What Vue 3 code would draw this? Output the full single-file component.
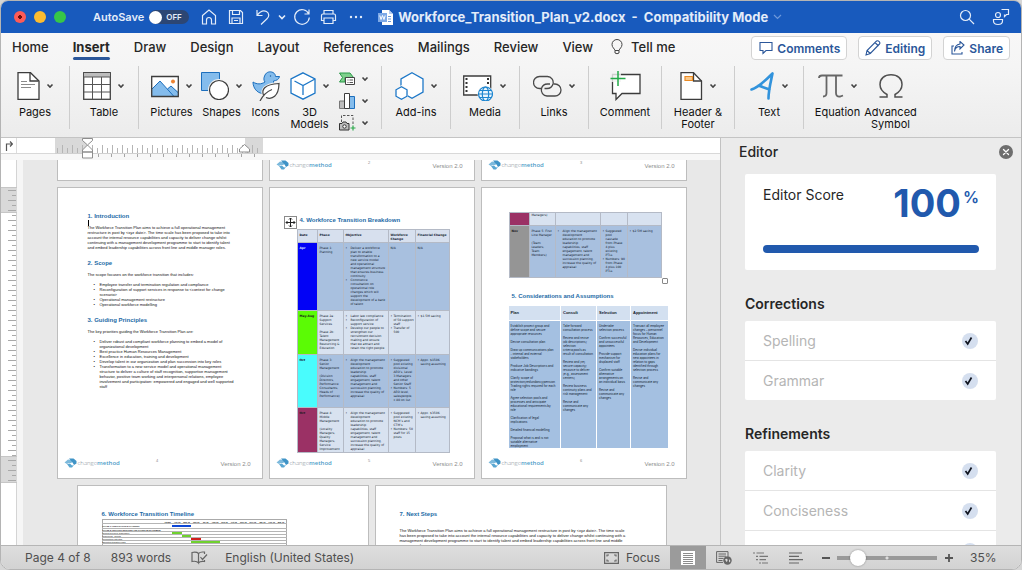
<script setup>
import { ref } from 'vue'

const autoSave = ref(false)
const zoom = ref(15)
const tabs = ['Home', 'Insert', 'Draw', 'Design', 'Layout', 'References', 'Mailings', 'Review', 'View']
const activeTab = ref('Insert')

const hTicks = Array.from({ length: 41 }, (_, i) => ({ x: 2 + i * 5, tall: i % 2 === 1 }))
const vTicks = Array.from({ length: 59 }, (_, i) => ({ y: 3 + i * 5, long: i % 2 === 0 }))

const intro = [
  {
    title: '1. Introduction', caret: true,
    text: 'The Workforce Transition Plan aims to achieve a full operational management\nrestructure in post by <xyz date>. The time scale has been proposed to take into\naccount the internal resource capabilities and capacity to deliver change whilst\ncontinuing with a management development programme to start to identify talent\nand embed leadership capabilities across front line and middle manager roles.',
    items: []
  },
  {
    title: '2. Scope',
    text: 'The scope focuses on the workforce transition that includes:',
    items: [
      'Employee transfer and termination regulation and compliance',
      'Reconfiguration of support services in response to <context for change\nscenario>',
      'Operational management restructure',
      'Operational workforce modelling'
    ]
  },
  {
    title: '3. Guiding Principles',
    text: 'The key priorities guiding the Workforce Transition Plan are:',
    items: [
      'Deliver robust and compliant workforce planning to embed a model of\norganizational development',
      'Best practice Human Resources Management',
      'Excellence in education, training and development',
      'Develop talent in our organization and plan succession into key roles',
      'Transformation to a new service model and operational management\nstructure to deliver a culture of staff recognition, supportive management\nbehavior, positive team working and interpersonal relations, employee\ninvolvement and participation: empowered and engaged and well supported\nstaff'
    ]
  }
]

const nextSteps = 'The Workforce Transition Plan aims to achieve a full operational management restructure in post by <xyz date>. The time scale\nhas been proposed to take into account the internal resource capabilities and capacity to deliver change whilst continuing with a\nmanagement development programme to start to identify talent and embed leadership capabilities across front line and middle\nmanager roles.'

const align = ['Align the management\ndevelopment\neducation to promote\nleadership\ncapabilities, staff\nengagement, talent\nmanagement and\nsuccession planning,\nincrease the quality of\nappraisal']

const breakdown = [
  {
    h: 68, tone: 'shade', mark: 'blue', date: 'Apr', phase: 'Phase 1:\nPlanning',
    objective: ['Deliver a workforce\nplan to enable\ntransformation to a\nnew service model\nand operational\nmanagement structure\nthat ensures business\ncontinuity', 'Commence\nconsultation on\noperational role\nchanges which will\nsupport the\ndevelopment of a bank\nof talent'],
    workforce: 'N/A', finance: 'N/A'
  },
  {
    h: 44, tone: 'tint', mark: 'green', date: 'May-Aug', phase: 'Phase 2a:\nSupport\nServices\n\nPhase 2b:\nTalent\nManagement\nResourcing &\nEducation',
    objective: ['Labor law compliance', 'Reconfiguration of\nsupport service', 'Develop our people to\nstrengthen our\nrecruitment decision\nmaking and ensure\nthat we attract and\nretain the right people'],
    workforce: ['Termination\nof 50 support\nstaff', 'Transfer of\n500'], finance: ['$1.5M saving']
  },
  {
    h: 53, tone: 'shade', mark: 'cyan', date: 'Oct', phase: 'Phase 3:\nSenior\nManagement\n\n(Division\nDirectors,\nPerformance\nConsultants,\nHeads of\nPerformance)',
    objective: align,
    workforce: ['Suggested\npool existing\ndivisional\nAEO’s, Level\n3 Managers\nand other\nSenior Staff', 'Numbers: 5\nAEO level,\nsalespeople,\nx 80 on list'], finance: ['Appx. $150K\nsaving assuming']
  },
  {
    h: 45, tone: 'tint', mark: 'plum', date: 'Oct', phase: 'Phase 4:\nMiddle\nManagement\n\n(Locality\nManagers,\nQuality\nManagers,\nService\nImprovement',
    objective: align,
    workforce: ['Suggested\npool existing\nNCM’s and\nCTM’s', 'Numbers: 50\nstaff for 15\nposts'], finance: ['Appx. $350K\nsaving assuming']
  }
]

const continued = [
  { h: 13, tone: 'tint', mark: 'plum', date: '', phase: 'Managers)', objective: [], workforce: '', finance: '', cut: true },
  {
    h: 52, tone: 'shade', mark: 'gray', date: 'Nov', phase: 'Phase 5: First\nLine Manager\n\n(Team\nLeaders,\nTeam\nMembers)',
    objective: align,
    workforce: ['Suggested\npool\ncascade\nfrom Phase\n4 plus\nexisting\nPTLs', 'Numbers: 90\nfrom Phase\n4 plus 100\nPTLs'], finance: ['$2.5M saving']
  }
]

const plan = [
  { title: 'Plan', text: 'Establish project group and\ndefine scope and secure\nappropriate resources\n\nDevise consultation plan\n\nDraw up communications plan\n- internal and external\nstakeholders\n\nProduce Job Descriptions and\nindicative bandings\n\nClarify scope of\nprotection/redundancy/pension\nTrading rights required for each\nrole\n\nAgree selection pools and\nprocesses and anticipate\neducational requirements by\nrole\n\nClarification of legal\nimplications\n\nDetailed financial modelling\n\nProposal what is and is not\nsuitable alternative\nemployment' },
  { title: 'Consult', text: 'Take forward\nconsultation process\n\nReview and revise\njob descriptions/\nselection\ncriteria/pools as\nresult of consultation\n\nReview and (re)\nsecure capacity/\nresource to deliver\n(e.g., assessment\ncenters)\n\nReview business\ncontinuity plans and\nrisk management\n\nRevise and\ncommunicate any\nchanges' },
  { title: 'Selection', text: 'Undertake\nselection process\n\nConfirm successful\nand unsuccessful\nappointees\n\nProvide support\nmechanism for\ndisplaced staff\n\nConfirm suitable\nalternative\narrangements on\nan individual basis\n\nRevise and\ncommunicate any\nchanges' },
  { title: 'Appointment', text: 'Transact all employee\nchanges – personnel\nfocus for Human\nResources, Education\nand Development\n\nDevise individual\neducation plans for\nnew appointees in\nrelation to gaps\nidentified through\nselection process\n\nRevise and\ncommunicate any\nchanges' }
]

const months = ['12 Mar', 'Apr 12', 'May 12', 'Jun 12', 'Jul 12', 'Aug 12', 'Sep 12', 'Oct 12', 'Nov 12', 'Dec 12', 'Jan 13', 'Feb 13', 'Mar 13']
const gantt = [
  { h: 5, label: 'PHASE 1: PREPARATION & PLANNING', from: 9, width: 19, color: '#0d47d6', bold: true },
  { h: 3, label: 'PHASE 2: SUPPORT SERVICES AND TALENT MANAGEMENT', from: 0, width: 0, color: 'transparent', bold: true },
  { h: 3, label: 'Support Services: Suspension', from: 9, width: 10, color: '#6fd12f' },
  { h: 3, label: 'Resourcing - Talents', from: 19, width: 9, color: '#6fd12f' },
  { h: 3, label: 'Consultation with staff', from: 28, width: 10, color: '#d0201c' },
  { h: 3, label: 'Education/transition posts', from: 28, width: 29, color: '#6fd12f' },
  { h: 4, label: 'Implementation of posts', from: 9, width: 29, color: '#6fd12f' },
  { h: 3, label: 'Full new structure', from: 38, width: 9, color: '#d0201c' }
]

const rows = [
  { key: 'top', pages: [{ id: 'p1', kind: 'blank' }, { id: 'p2', kind: 'blank', num: 2 }, { id: 'p3', kind: 'blank', num: 3 }] },
  { key: 'middle', pages: [{ id: 'p4', kind: 'intro', num: 4 }, { id: 'p5', kind: 'breakdown', num: 5 }, { id: 'p6', kind: 'assumptions', num: 6 }] },
  { key: 'bottom', pages: [{ id: 'p7', kind: 'timeline' }, { id: 'p8', kind: 'next' }] }
]

const editorGroups = [
  { title: 'Corrections', items: ['Spelling', 'Grammar'] },
  { title: 'Refinements', items: ['Clarity', 'Conciseness', ''] }
]
</script>

<template>
  <div class="window">
    <header class="titlebar">
      <div class="lights">
        <button class="light red" aria-label="Close"></button>
        <button class="light yellow" aria-label="Minimize"></button>
        <button class="light green" aria-label="Zoom"></button>
      </div>
      <label class="autosave">
        <span>AutoSave</span>
        <input v-model="autoSave" type="checkbox" />
        <span class="switch"><i></i>OFF</span>
      </label>
      <div class="quick">
        <button aria-label="Home"><svg width="16" height="16" viewBox="0 0 16 16"><path d="M1.500 6.500 8 1l6.500 5.500v8.500h-4V11a2.500 2.500 0 0 0-5 0v4h-4z" /></svg></button>
        <button aria-label="Save"><svg width="16" height="16" viewBox="0 0 16 16"><path d="M1.500 1.500h11l2 2v11h-13zM4.500 1.500v4h7v-4M4 14.500V9h8v5.500M6 11.500h4" /></svg></button>
        <button aria-label="Undo"><svg width="16" height="16" viewBox="0 0 16 16"><path d="M2 1v5.500h5.500M2.300 6.200C5 2.500 8.500 1 11.500 2.500c3 1.800 2.800 5.200.5 7.300L6 15.500" /></svg></button>
        <button class="slim" aria-label="Undo list"><svg class="thick" width="8" height="6" viewBox="0 0 8 6"><path d="m1 1.500 3 3 3-3" /></svg></button>
        <button aria-label="Redo"><svg width="18" height="18" viewBox="0 0 18 18"><path d="M16 1.500V6h-4.500M15.700 6A7.300 7.300 0 1 0 16.300 9.500" /></svg></button>
        <button aria-label="Print"><svg width="17" height="16" viewBox="0 0 17 16"><path d="M4 5V1.500h9V5M4 11.500H1.500v-5q0-1.500 1.500-1.500h11q1.500 0 1.500 1.500v5H13M4 9h9v5.500H4z" /></svg></button>
        <button aria-label="More"><svg class="solid" width="14" height="4" viewBox="0 0 14 4"><circle cx="2" cy="2" r="1.200" /><circle cx="7" cy="2" r="1.200" /><circle cx="12" cy="2" r="1.200" /></svg></button>
      </div>
      <h1 class="doc-name">
        <svg width="15" height="15" viewBox="0 0 15 15"><path d="M4 0h7l4 4v11H4z" fill="#fff" /><path d="M11 0v4h4z" fill="#b6cdf0" /><path d="M10 6.500h3M10 9h3M10 11.500h3" stroke="#6a97d8" /><rect y="3" width="9" height="9" fill="#7ea9e6" /><path d="m1.800 5.500 1.200 4 1.500-4 1.500 4 1.200-4" fill="none" stroke="#fff" /></svg>
        <span>Workforce_Transition_Plan_v2.docx&nbsp; -&nbsp; Compatibility Mode</span>
        <svg width="9" height="6" viewBox="0 0 9 6"><path d="m1 1 3.500 3.500L8 1" fill="none" stroke="#6e98da" stroke-width="1.200" /></svg>
      </h1>
      <div class="title-right">
        <button aria-label="Search"><svg width="16" height="16" viewBox="0 0 16 16"><circle cx="6.500" cy="6.500" r="5" /><path d="m10.200 10.200 4.800 4.800" /></svg></button>
        <button aria-label="Presence"><svg width="18" height="18" viewBox="0 0 18 18"><path d="M9.500 1.500h7v5h-2l-2 2v-2" /><circle cx="6" cy="7" r="2.500" /><path d="M1.500 11.500h9v1.500q0 3.500-4.500 3.500T1.500 13z" /></svg></button>
      </div>
    </header>

    <nav class="tabs">
      <button v-for="t in tabs" :key="t" class="tab" :class="{ active: t === activeTab }" @click="activeTab = t">{{ t }}</button>
      <button class="tab tell">
        <svg width="12" height="16" viewBox="0 0 12 16"><path d="M4 11.500C3.500 9.500 1 8.500 1 5.500a5 5 0 0 1 10 0c0 3-2.500 4-3 6zM4 11.500v2.500q2 1.500 4 0v-2.500" fill="none" stroke="#444" /></svg>Tell me
      </button>
      <div class="actions">
        <button><svg width="14" height="14" viewBox="0 0 14 14"><path d="M1 1.500h12v8H7l-3 3v-3H1z" /></svg>Comments</button>
        <button class="tight"><svg width="16" height="16" viewBox="0 0 16 16"><path d="m1 15 1-4.500L11.500 1q1.500-.8 2.700.6T14.500 4L5.300 13.500zM10 2.500 13.500 6M2 10.500 5.300 13.500" /></svg>Editing</button>
        <button><svg width="14" height="14" viewBox="0 0 14 14"><path d="M3 5H1v8h10v-2M3.500 10.500C4 7 6 5.500 9 5.500v2.500l4-4-4-3.500V3C5.500 3.500 3.500 6 3.500 10.500z" /></svg>Share</button>
      </div>
    </nav>

    <section class="ribbon">
      <div class="group single">
        <button class="tool">
          <span class="icons"><svg width="23" height="28" viewBox="0 0 23 28"><path d="M1 .700h12.500L22 9v18.300H1z" fill="#fff" stroke="#3c3c3c" stroke-width="1.300" /><path d="M13 1v8h8.500" fill="none" stroke="#3c3c3c" stroke-width="1.300" /><path d="M4 9.500h6M4 12.500h14M4 15.500h10" stroke="#8a8a8a" /></svg><svg class="chev" viewBox="0 0 8 6"><path d="m1.500 1.500 2.500 2.500 2.500-2.500" /></svg></span>
          <span class="label">Pages</span>
        </button>
      </div>
      <div class="group single">
        <button class="tool">
          <span class="icons"><svg width="28" height="28" viewBox="0 0 28 28"><rect x=".700" y=".700" width="26.600" height="26.600" fill="#fff" stroke="#444" stroke-width="1.300" /><path d="M1 1h26v4H1z" fill="#bdbdbd" /><path d="M1 5h26M1 12.500h26M1 20h26M9.500 5v22M18.500 5v22" stroke="#555" /></svg><svg class="chev" viewBox="0 0 8 6"><path d="m1.500 1.500 2.500 2.500 2.500-2.500" /></svg></span>
          <span class="label">Table</span>
        </button>
      </div>
      <div class="group wide">
        <button class="tool">
          <span class="icons"><svg width="28" height="28" viewBox="0 0 28 28"><path d="M.700 4.500h26.600v20H.700z" fill="#fff" /><path d="m1 17 8-8 14 15.500H1zM16 17l4-3 7 6v4.500h-4z" fill="#84bcec" /><path d="m1 17 8-8 14 15.500M16.500 17l3.500-3 7 6.500" fill="none" stroke="#1d6fbd" /><circle cx="22" cy="9.500" r="2" fill="#ee8432" /><path d="M.700 4.500h26.600v20H.700z" fill="none" stroke="#3c3c3c" stroke-width="1.300" /></svg><svg class="chev" viewBox="0 0 8 6"><path d="m1.500 1.500 2.500 2.500 2.500-2.500" /></svg></span>
          <span class="label">Pictures</span>
        </button>
        <button class="tool">
          <span class="icons"><svg width="28" height="28" viewBox="0 0 28 28"><path d="M.500.500h18v18H.500z" fill="#84bcec" stroke="#1d6fbd" /><circle cx="18" cy="18" r="11" fill="#f1f1f1" /><circle cx="18" cy="18" r="9.500" fill="#fff" stroke="#3c3c3c" stroke-width="1.200" /></svg><svg class="chev" viewBox="0 0 8 6"><path d="m1.500 1.500 2.500 2.500 2.500-2.500" /></svg></span>
          <span class="label">Shapes</span>
        </button>
        <button class="tool narrow">
          <span class="icons"><svg width="28" height="30" viewBox="0 0 28 30"><path d="M1 11c4 2.500 8 2.500 12 0-1.500-2-1.500-4 0-7s5-4 8-2.500c2 1 2.500 3 2.500 4h4c-.5 3-3 4-6 4.500v8c-2 4-7 5-11 4.500C5 22 1 17 1 11z" fill="#84bcec" stroke="#1d6fbd" /><path d="M11.500 24c-2-5 0-10.500 15.500-11.500-.3 13-7 16.500-13 14z" fill="#fff" stroke="#f1f1f1" stroke-width="3" /><path d="M11.500 24c-2-5 0-10.500 15.500-11.500-.3 13-7 16.500-13 14" fill="#fff" stroke="#444" stroke-width="1.200" /><path d="M8 30c3-6 7-9.500 12-11.500" fill="none" stroke="#444" stroke-width="1.200" /><circle cx="18.500" cy="5" r=".7" fill="#1d5f9f" /></svg></span>
          <span class="label">Icons</span>
        </button>
        <button class="tool">
          <span class="icons"><svg width="26" height="28" viewBox="0 0 26 28"><path d="m13 .800 12 6.200v14l-12 6.200L1 21V7z" fill="#fff" stroke="#1e78c8" stroke-width="1.300" /><path d="m4.500 9 8.500 4.500L25 7M13 13.500V23" fill="none" stroke="#1e78c8" stroke-width="1.300" /></svg><svg class="chev" viewBox="0 0 8 6"><path d="m1.500 1.500 2.500 2.500 2.500-2.500" /></svg></span>
          <span class="label">3D<br />Models</span>
        </button>
        <div class="stack">
          <button aria-label="SmartArt"><svg width="17" height="16" viewBox="0 0 17 16"><path d="M.500 2h10.500l3.500 4.500H6V11H.500l3-4.500z" fill="#7fd08c" stroke="#2b9a49" /><path d="M6.500 6.500h9v7h-9z" fill="#fff" stroke="#444" /><path d="M8.500 9h1m1 0h3.500m-5.500 2.500h1m1 0h3.500" stroke="#555" /></svg><svg class="chev" viewBox="0 0 8 6"><path d="m1.500 1.500 2.500 2.500 2.500-2.500" /></svg></button>
          <button aria-label="Chart"><svg width="17" height="16" viewBox="0 0 17 16"><path d="M.500 8h5v7.500h-5z" fill="#bdbdbd" stroke="#777" /><path d="M10.500 3.500h5v12h-5z" fill="#84bcec" stroke="#1d6fbd" /><path d="M5.500.500h5v15h-5z" fill="#fff" stroke="#3c3c3c" /></svg><svg class="chev" viewBox="0 0 8 6"><path d="m1.500 1.500 2.500 2.500 2.500-2.500" /></svg></button>
          <button aria-label="Screenshot"><svg width="17" height="16" viewBox="0 0 17 16"><path d="M2.500 7V.500h11.500V9" fill="none" stroke="#555" stroke-dasharray="2.500 1.500" /><path d="M.500 8.500h2.500l1-1.500h3l1 1.500h2v6.500H.500z" fill="#bdbdbd" stroke="#333" /><circle cx="5.500" cy="11.500" r="1.700" fill="#fff" stroke="#333" /><path d="M14 10.500v5M11.500 13h5" stroke="#2ba84a" stroke-width="1.200" /></svg><svg class="chev" viewBox="0 0 8 6"><path d="m1.500 1.500 2.500 2.500 2.500-2.500" /></svg></button>
        </div>
      </div>
      <div class="group single">
        <button class="tool">
          <span class="icons"><svg width="29" height="28" viewBox="0 0 29 28"><path d="m17 .800 11 6.200v13l-11 6.200L6 20V7z" fill="#fff" stroke="#1e78c8" stroke-width="1.300" /><path d="m6.500 13 6.500 4v7.500L6.500 28 0 24.500V17z" fill="#f3f3f3" /><path d="m6.500 14.800 5.500 3v6.400l-5.500 3-5.500-3v-6.400z" fill="#fff" stroke="#1e78c8" stroke-width="1.300" /></svg><svg class="chev" viewBox="0 0 8 6"><path d="m1.500 1.500 2.500 2.500 2.500-2.500" /></svg></span>
          <span class="label">Add-ins</span>
        </button>
      </div>
      <div class="group single">
        <button class="tool">
          <span class="icons"><svg width="30" height="30" viewBox="0 0 30 30"><path d="M.700 5h27v19H.700z" fill="#fff" stroke="#3c3c3c" stroke-width="1.300" /><path d="M3.500 7v16M25 7v6" stroke="#333" stroke-width="2" stroke-dasharray="2 2" /><circle cx="22.500" cy="23" r="8" fill="#f1f1f1" /><g fill="none" stroke="#1e86d0" stroke-width="1.200"><circle cx="22.500" cy="23" r="7" fill="#eaf5fd" /><ellipse cx="22.500" cy="23" rx="3.200" ry="7" /><path d="M15.500 23h14M16.500 19.500h12M16.500 26.500h12" /></g></svg><svg class="chev" viewBox="0 0 8 6"><path d="m1.500 1.500 2.500 2.500 2.500-2.500" /></svg></span>
          <span class="label">Media</span>
        </button>
      </div>
      <div class="group single">
        <button class="tool">
          <span class="icons"><svg width="29" height="28" viewBox="0 0 29 28"><g fill="none" stroke="#4a4a4a" stroke-width="1.300"><path d="M8 16.500H6.500a6 6 0 0 1 0-12h8a6 6 0 0 1 5.500 7.500c-.8 2.800-3 4.500-6 4.500h-2.500" /><path d="M20.500 12H22a6 6 0 0 1 0 12h-8a6 6 0 0 1-5.500-7.500c.8-2.800 3-4.500 6-4.500h2.500" /></g></svg><svg class="chev" viewBox="0 0 8 6"><path d="m1.500 1.500 2.500 2.500 2.500-2.500" /></svg></span>
          <span class="label">Links</span>
        </button>
      </div>
      <div class="group medium">
        <button class="tool">
          <span class="icons"><svg width="31" height="30" viewBox="0 0 31 30"><path d="M2.500 3.500H30v19H12l-6 6v-6H2.500z" fill="#fff" stroke="#3c3c3c" stroke-width="1.300" /><path d="M0 0h11v11H0z" fill="#f3f3f3" opacity=".8" /><path d="M8 0v15M.500 7.500h15" stroke="#22aa48" stroke-width="1.500" /></svg></span>
          <span class="label">Comment</span>
        </button>
      </div>
      <div class="group medium">
        <button class="tool">
          <span class="icons"><svg width="23" height="28" viewBox="0 0 23 28"><path d="M1 .700h12.500L21.500 9v18.300H1z" fill="#fff" stroke="#3c3c3c" stroke-width="1.300" /><path d="M13.500 1v8h8" fill="none" stroke="#3c3c3c" stroke-width="1.300" /><path d="M5 4.500h7.500v4H5z" fill="#fbc98a" stroke="#e98a25" stroke-width="1.200" /></svg><svg class="chev" viewBox="0 0 8 6"><path d="m1.500 1.500 2.500 2.500 2.500-2.500" /></svg></span>
          <span class="label">Header &amp;<br />Footer</span>
        </button>
      </div>
      <div class="group single">
        <button class="tool">
          <span class="icons"><svg width="25" height="28" viewBox="0 0 25 28"><path d="M1.500 17.500C8 15.500 16 8 22.500 1.500 21 9 18.500 18 18.500 26.500M8.500 13.500l11 4" fill="none" stroke="#3293dc" stroke-width="2.600" stroke-linecap="round" stroke-linejoin="round" /></svg><svg class="chev" viewBox="0 0 8 6"><path d="m1.500 1.500 2.500 2.500 2.500-2.500" /></svg></span>
          <span class="label">Text</span>
        </button>
      </div>
      <div class="group last">
        <button class="tool">
          <span class="icons"><svg width="26" height="28" viewBox="0 0 26 28"><path d="M1 6q0-2.500 3-2.500h20.500M8.500 3.500V21q0 3.500-3.500 3.500M18 3.500V21q0 4 4 3.500l3-1" fill="none" stroke="#666" stroke-width="1.800" /></svg><svg class="chev" viewBox="0 0 8 6"><path d="m1.500 1.500 2.500 2.500 2.500-2.500" /></svg></span>
          <span class="label">Equation</span>
        </button>
        <button class="tool">
          <span class="icons"><svg width="26" height="28" viewBox="0 0 26 28"><path d="M1.500 25H9v-2.500C4.500 20 2 17 2 12.500 2 6.500 6.500 2.800 13 2.800s11 3.700 11 9.700c0 4.500-2.500 7.500-7 10V25h7.500" fill="none" stroke="#505050" stroke-width="1.500" /></svg></span>
          <span class="label">Advanced<br />Symbol</span>
        </button>
      </div>
    </section>

    <main class="workspace">
      <div class="document">
        <div class="h-ruler">
          <span class="corner"><svg width="8" height="10" viewBox="0 0 8 10"><path d="M1.500 10V3H7M5 .500 7.500 3 5 5.500" fill="none" stroke="#555" stroke-width="1.200" /></svg></span>
          <svg class="h-scale" width="208" height="22" viewBox="0 0 208 22">
            <path d="M0 0h32v15H0zM190 0h18v15h-18z" fill="#d9d9d9" />
            <path d="M0 15.500h208" stroke="#d0d0d0" />
            <path v-for="t in hTicks" :key="t.x" :d="`M${t.x + 0.5} ${t.tall ? 7 : 10}V15`" stroke="#b5b5b5" />
            <path v-for="n in 13" :key="'u' + n" :d="`M${30.500 + n * 13} 16v3`" stroke="#a5a5a5" />
            <path d="M27.500.500h10v2l-5 4.500-5-4.500zM32.500 7l5 5v2h-10v-2zM27.500 14h10v6h-10zM184.500 14v-3l5-4.500 5 4.500v3z" fill="#fff" stroke="#8d8d8d" />
          </svg>
        </div>
        <div class="doc-body">
          <div class="v-ruler">
            <svg width="16" height="296" viewBox="0 0 16 296">
              <path d="M0 0h16v25H0zM0 270h16v25H0z" fill="#d9d9d9" />
              <path d="M0 25.500h16M0 269.500h16M0 .500h16M0 295.500h16" stroke="#c6c6c6" />
              <path v-for="t in vTicks" :key="t.y" :d="`M${t.long ? 7 : 11} ${t.y + 0.5}H15`" stroke="#a9a9a9" />
            </svg>
          </div>
          <div class="canvas">
            <div v-for="row in rows" :key="row.key" class="row" :class="row.key">
              <article v-for="page in row.pages" :key="page.id" class="page" :class="page.kind">
                <div v-if="page.kind === 'intro'" class="content">
                  <template v-for="s in intro" :key="s.title">
                    <h2>{{ s.title }}</h2>
                    <i v-if="s.caret" class="caret"></i>
                    <p>{{ s.text }}</p>
                    <ul v-if="s.items.length"><li v-for="item in s.items" :key="item">{{ item }}</li></ul>
                  </template>
                </div>

                <div v-else-if="page.kind === 'breakdown' || page.kind === 'assumptions'" class="content">
                  <div v-if="page.kind === 'breakdown'" class="table-title">
                    <span class="move"><svg width="11" height="11" viewBox="0 0 11 11"><path d="M5.500 1v9M1 5.500h9M4 2.500 5.500 1 7 2.500M4 8.500 5.500 10 7 8.500M2.500 4 1 5.500 2.500 7M8.500 4 10 5.500 8.500 7" fill="none" stroke="#222" /></svg></span>
                    <h2>4. Workforce Transition Breakdown</h2>
                  </div>
                  <table class="phases">
                    <colgroup><col class="c1" /><col class="c2" /><col class="c3" /><col class="c4" /><col class="c5" /></colgroup>
                    <thead v-if="page.kind === 'breakdown'">
                      <tr><th>Date</th><th>Phase</th><th>Objective</th><th>Workforce<br />Change</th><th>Financial Change</th></tr>
                    </thead>
                    <tbody>
                      <tr v-for="(r, i) in (page.kind === 'breakdown' ? breakdown : continued)" :key="i" :class="[r.tone, { cut: r.cut }]" :style="{ height: r.h + 'px' }">
                        <td class="date" :class="r.mark">{{ r.date }}</td>
                        <td>{{ r.phase }}</td>
                        <td><ul class="loose"><li v-for="o in r.objective" :key="o">{{ o }}</li></ul></td>
                        <td v-for="(c, k) in [r.workforce, r.finance]" :key="k">
                          <ul v-if="Array.isArray(c)"><li v-for="o in c" :key="o">{{ o }}</li></ul>
                          <template v-else>{{ c }}</template>
                        </td>
                      </tr>
                    </tbody>
                  </table>
                  <template v-if="page.kind === 'assumptions'">
                    <span class="resize"></span>
                    <h2>5. Considerations and Assumptions</h2>
                    <table class="plan">
                      <colgroup><col class="d1" /><col class="d2" /><col class="d3" /><col class="d4" /></colgroup>
                      <thead><tr><th v-for="c in plan" :key="c.title">{{ c.title }}</th></tr></thead>
                      <tbody><tr><td v-for="c in plan" :key="c.title">{{ c.text }}</td></tr></tbody>
                    </table>
                  </template>
                </div>

                <div v-else-if="page.kind === 'timeline'" class="content">
                  <h2>6. Workforce Transition Timeline</h2>
                  <table class="gantt">
                    <thead><tr><th class="task"></th><th v-for="m in months" :key="m">{{ m }}</th></tr></thead>
                    <tbody>
                      <tr v-for="(g, i) in gantt" :key="i" :style="{ height: g.h + 'px' }">
                        <th class="task" :class="{ strong: g.bold }">{{ g.label }}</th>
                        <td colspan="13"><div class="bar" :style="{ marginLeft: g.from + 'px', width: g.width + 'px', background: g.color }"></div></td>
                      </tr>
                    </tbody>
                  </table>
                </div>

                <div v-else-if="page.kind === 'next'" class="content">
                  <h2>7. Next Steps</h2>
                  <p>{{ nextSteps }}</p>
                </div>

                <footer v-if="page.num" class="page-foot">
                  <span class="brand">
                    <svg width="13" height="10" viewBox="0 0 13 10"><path d="M.500 4.500 4 1.500l3 .5 2.500 1.500L7 5H4.500L3 6z" fill="#7cb9dc" /><path d="M5 .500h4.500L12.500 3v2.500L10 7 8.500 4.500z" fill="#3f93c6" /><path d="m3 6 3-.500L8 7.500l2-.500L8 9.500H5.500z" fill="#5aa7d2" /></svg>
                    <span>change<b>method</b></span>
                  </span>
                  <span class="num">{{ page.num }}</span>
                  <span class="version">Version 2.0</span>
                </footer>
              </article>
            </div>
          </div>
        </div>
      </div>

      <aside class="editor">
        <header>
          <h2>Editor</h2>
          <button aria-label="Close editor"><svg width="14" height="14" viewBox="0 0 14 14"><circle cx="7" cy="7" r="7" fill="#6e6e6e" /><path d="m4.500 4.500 5 5M9.500 4.500l-5 5" stroke="#fff" stroke-width="1.300" stroke-linecap="round" /></svg></button>
        </header>
        <div class="score">
          <div class="score-top">
            <span>Editor Score</span>
            <strong>100<sup>%</sup></strong>
          </div>
          <div class="meter"></div>
        </div>
        <section v-for="g in editorGroups" :key="g.title">
          <h3>{{ g.title }}</h3>
          <ul>
            <li v-for="(item, i) in g.items" :key="i">
              <span>{{ item }}</span>
              <svg width="16" height="16" viewBox="0 0 16 16"><circle cx="8" cy="8" r="8" fill="#d5dfef" /><path d="m3.500 8 2.200 3 3.800-6.500" fill="none" stroke="#10141f" stroke-width="1.700" /></svg>
            </li>
          </ul>
        </section>
      </aside>
    </main>

    <footer class="status">
      <span>Page 4 of 8</span>
      <span class="words">893 words</span>
      <button class="proof" aria-label="Proofing"><svg width="17" height="14" viewBox="0 0 17 14"><path d="M7.500 2.500C6 1 3.500 1 1 1.500v9c2.500-.5 5-.5 6.500 1.500V2.500c1-1 2.500-1.500 4-1.500h2v2M7.500 12c1-1.500 3-1.800 6-1.500V9M9.500 6l2 2.500 4.500-5" fill="none" stroke="#666" stroke-width="1.200" /></svg></button>
      <span>English (United States)</span>
      <button class="focus"><svg width="15" height="12" viewBox="0 0 15 12"><path d="M.600.600h13.800v10.800H.600zM3 4.500V3h2M10 3h2v1.500M3 7.500V9h2M10 9h2V7.500" fill="none" stroke="#666" stroke-width="1.200" /></svg>Focus</button>
      <button class="view on" aria-label="Print layout"><svg width="14" height="14" viewBox="0 0 14 14"><path d="M0 0h14v14H0z" fill="#fff" /><path d="M2 2.500h10M2 4.500h10M2 6.500h10M2 8.500h10M2 10.500h10M2 12.500h10" stroke="#8c8c8c" /></svg></button>
      <button class="view" aria-label="Web layout"><svg width="16" height="14" viewBox="0 0 16 14"><path d="M12 5.500V.600H.600v10.800H7M2.500 3h7.500M2.500 5.200h7.500M2.500 7.400h5M2.500 9.500h4" fill="none" stroke="#666" /><circle cx="11.500" cy="9.500" r="4.200" fill="#666" /><path d="M9 8.500q2-1.500 2.500 0t-1 2.500zM13 8l1.500 2-1.500 1.500z" fill="#ddd" /></svg></button>
      <button class="view" aria-label="Outline"><svg width="15" height="12" viewBox="0 0 15 12"><path d="M0 1h2M3.500 1H11M3 4.300h2M6.500 4.300H15M3 7.600h2M6.500 7.600H13M6 11h2M9 11h6" stroke="#777" stroke-width="1.200" /></svg></button>
      <button class="view" aria-label="Draft"><svg width="14" height="12" viewBox="0 0 14 12"><path d="M0 1h13M0 4.300h10M0 7.600h14M0 11h10" stroke="#666" stroke-width="1.200" /></svg></button>
      <button class="step" aria-label="Zoom out"><svg width="10" height="10" viewBox="0 0 10 10"><path d="M1 5h8" stroke="#555" stroke-width="1.800" /></svg></button>
      <input v-model="zoom" class="slider" type="range" min="0" max="100" aria-label="Zoom" />
      <button class="step" aria-label="Zoom in"><svg width="10" height="10" viewBox="0 0 10 10"><path d="M1 5h8M5 1v8" stroke="#555" stroke-width="1.800" /></svg></button>
      <span class="percent">35%</span>
    </footer>
  </div>
</template>

<style>
body { background: #d6d6d6; }
</style>

<style scoped>
* { box-sizing: border-box; }
h1, h2, h3, p, ul { margin: 0; padding: 0; }
ul { list-style: none; }
button { border: 0; padding: 0; background: none; font: inherit; color: inherit; }
svg { display: block; flex: none; }

.window {
  height: 100vh;
  display: flex;
  flex-direction: column;
  overflow: hidden;
  border: 1px solid #b4b4b4;
  border-radius: 8px 8px 10px 10px;
  background: #f5f4f4;
  font-family: Inter, "Liberation Sans", sans-serif;
  color: #262626;
}

.titlebar { flex: none; height: 32px; display: flex; align-items: center; padding: 0 11px 0 13px; background: #185abd; color: #e3ecf9; }
.lights { display: flex; gap: 8px; }
.light { width: 12px; height: 12px; border-radius: 50%; }
.red { background: radial-gradient(circle, #6f0d0b 0 2px, #fc5b57 2px); }
.yellow { background: #fdbc2f; }
.green { background: #37c648; }
.autosave { position: relative; display: flex; align-items: center; gap: 5px; margin-left: 27px; font-size: 11px; font-weight: 600; }
.autosave input { position: absolute; opacity: 0; }
.switch { display: flex; align-items: center; gap: 4px; width: 40px; height: 14px; border-radius: 7px; background: #2c4674; font-size: 8px; }
.switch i { width: 13px; height: 13px; border-radius: 50%; background: #fff; }
.quick { display: flex; align-items: center; margin-left: 6px; }
.quick button { width: 27px; display: flex; justify-content: center; }
.quick .slim { width: 12px; }
.quick svg, .title-right svg { fill: none; stroke: #e3ecf9; stroke-width: 1.2; }
.quick svg.solid { fill: #e3ecf9; stroke: none; }
.quick svg.thick { stroke-width: 1.6; }
.doc-name { display: flex; align-items: center; gap: 5px; margin-left: 9px; font-size: 13px; font-weight: 700; white-space: nowrap; }
.title-right { display: flex; gap: 17px; margin-left: auto; }

.tabs { flex: none; height: 33px; display: flex; gap: 24px; padding: 0 11px; background: linear-gradient(#f8f7f7, #f5f5f5); font-size: 13px; font-weight: 500; }
.tab { display: flex; flex-direction: column; align-items: center; white-space: nowrap; line-height: 16px; padding-top: 6px; }
.active { font-weight: 700; }
.active::after { content: ""; width: 100%; height: 3px; margin-top: 2px; border-radius: 2px; background: #2b579a; }
.tell { flex-direction: row; align-items: flex-start; gap: 8px; margin-left: -6px; }
.actions { display: flex; gap: 11px; margin-left: auto; padding-top: 3px; color: #2b579a; font-size: 12px; font-weight: 600; }
.actions button { display: flex; align-items: center; gap: 4px; height: 24px; padding: 0 6px 0 7px; border: 1px solid #d3d3d3; border-radius: 4px; background: #fff; }
.actions button.tight { padding: 0 6px; }
.actions svg { fill: none; stroke: #2b579a; stroke-width: 1.1; }

.ribbon { flex: none; height: 72px; display: flex; border-bottom: 1px solid #c4c4c4; background: linear-gradient(#f5f5f5, #ececec); }
.group { height: 63px; display: flex; justify-content: center; border-right: 1px solid #cdcdcd; }
.single { width: 69px; }
.medium { width: 73px; }
.wide { width: 243px; padding-left: 5px; }
.last { border: 0; padding-left: 7px; }
.tool { width: 53px; display: flex; flex-direction: column; align-items: center; padding-top: 6px; }
.wide .tool { width: 50px; }
.wide .narrow { width: 38px; }
.icons { height: 28px; display: flex; align-items: center; gap: 6px; margin-bottom: 6px; }
.chev { width: 8px; height: 6px; fill: none; stroke: #444; stroke-width: 1.6; }
.label { font-size: 11px; line-height: 12px; text-align: center; color: #111; }
.stack { display: flex; flex-direction: column; gap: 6px; padding: 5px 0 0 4px; width: 44px; }
.stack button { display: flex; align-items: center; gap: 5px; }

.workspace { flex: 1; min-height: 0; display: flex; overflow: hidden; }
.document { flex: 1; min-width: 0; display: flex; flex-direction: column; }
.h-ruler { flex: none; height: 22px; display: flex; background: linear-gradient(#fff 0 15px, #d8d8d8 15px 16px, #f7f7f7 16px); }
.corner { width: 16px; height: 15px; padding: 3px 0 0 4px; border-right: 1px solid #ddd; }
.h-scale { margin-left: 38px; }
.doc-body { flex: 1; min-height: 0; display: flex; }
.v-ruler { flex: none; width: 22px; padding-top: 27px; background: linear-gradient(90deg, #fff 0 15px, #d4d4d4 15px 16px, #f6f6f6 16px); }
.canvas { flex: 1; min-width: 0; display: flex; flex-direction: column; gap: 6px; overflow: hidden; background: #e8e8e8; }
.row { flex: none; display: flex; justify-content: center; gap: 6px; }
.page { display: flex; flex-direction: column; width: 206px; border: 1px solid #bdbdbd; background: #fff; color: #111; font-family: "Liberation Sans", Arial, sans-serif; font-size: 4px; line-height: 5px; }
.top .page { height: 21px; border-top: 0; justify-content: flex-end; }
.middle .page { height: 292px; }
.bottom .page { width: 292px; height: 206px; }
.content { flex: 1; min-height: 0; display: flex; flex-direction: column; align-items: flex-start; white-space: pre; }
.page h2 { font-size: 6px; line-height: 8px; color: #1d6ba6; }

.intro .content { padding: 24px 0 0 30px; }
.caret { width: 1px; height: 6px; background: #000; }
.intro .caret + p { margin: -1px 0 9px; }
.intro h2 + p { margin: 5px 0; }
.intro ul { margin-bottom: 9px; }
.intro li { position: relative; padding-left: 12px; }
.intro li::before { content: "•"; position: absolute; left: 6px; }

.table-title { display: flex; gap: 3px; }
.move { width: 13px; height: 13px; border: 1px solid #8a8a8a; background: #fff; }
.breakdown .content { padding: 28px 0 0 14px; }
.breakdown .phases { margin-left: 13px; }
.assumptions .content { padding: 24px 0 0 27px; }
.assumptions h2 { margin: 8px 0 6px 3px; }
.phases, .plan { table-layout: fixed; border-collapse: collapse; line-height: 4px; font-size: 3px; }
.phases { width: 153px; border: 1px solid #adb3bd; color: #101a2e; font-family: "DejaVu Sans", sans-serif; }
.phases th, .phases td { padding: 3px 0 0 2px; border: 1px solid #b4bac6; text-align: left; vertical-align: top; }
.phases th { background: #d7e0ee; }
.phases thead tr { height: 13px; }
.c1 { width: 20px; }
.c2 { width: 26px; }
.c3 { width: 45px; }
.c4 { width: 27px; }
.c5 { width: 34px; }
.shade { background: #a8c0df; }
.tint { background: #d8e2f0; }
.phases .cut td { padding-top: 0; }
.phases .date { font-weight: 700; color: #1a1a1a; }
.phases .blue { background: #0202f6; color: #dfe4ff; }
.phases .green { background: #5bfb05; }
.date.cyan { background: #49fcfd; }
.date.plum { background: #9b3165; }
.date.gray { background: #959595; }
.phases li { position: relative; padding-left: 3px; }
.phases li::before { content: "•"; position: absolute; left: 0; }
.phases .loose li { padding-left: 5px; }
.resize { width: 6px; height: 6px; margin-left: 153px; border: 1px solid #888; border-radius: 1px; background: #fff; }
.plan { width: 160px; background: #fff; color: #101a2e; font-family: Inter, sans-serif; }
.plan th { height: 14px; padding: 0 0 0 2px; border-right: 1px solid #fff; background: #d3e0f0; text-align: left; font-family: "Liberation Sans", sans-serif; font-size: 4px; }
.plan td { padding: 3px 0 0 2px; border-right: 1px solid #fff; border-top: 1px solid #fff; background: #a4c0e1; vertical-align: top; }
.d1 { width: 52px; }
.d2 { width: 36px; }
.d3 { width: 34px; }
.d4 { width: 38px; }

.bottom .content { padding: 24px 0 0 24px; overflow: hidden; }
.next p { margin-top: 10px; }
.gantt { width: 185px; margin-top: 1px; table-layout: fixed; border-collapse: collapse; border: 1px solid #aaa; font-size: 2px; line-height: 2px; color: #111; }
.gantt th, .gantt td { padding: 0; border-bottom: 1px solid #b5b5b5; font-weight: 400; text-align: left; }
.gantt thead th { height: 4px; font-weight: 700; text-align: center; }
.gantt .task { width: 61px; }
.gantt .task.strong { font-weight: 700; }
.bar { height: 2px; }

.page-foot { flex: none; height: 14px; margin-bottom: 7px; padding: 0 11px 0 6px; display: grid; grid-template-columns: 1fr 10px 1fr; font-size: 6px; line-height: 8px; color: #8c8c8c; }
.brand { display: flex; align-items: center; gap: 1px; height: 11px; font-family: "Open Sans", sans-serif; font-weight: 300; color: #7d8a93; }
.brand b { font-weight: 600; color: #4f9dc9; }
.num { font-size: 4px; text-align: center; }
.version { text-align: right; align-self: center; }

.editor { flex: none; width: 301px; padding: 0 25px 0 24px; overflow: hidden; border-left: 1px solid #c2c2c2; background: #ebebeb; }
.editor header { display: flex; align-items: center; justify-content: space-between; height: 27px; margin: 0 -17px 9px -6px; }
.editor h2 { font-size: 14px; font-weight: 500; }
.score { height: 96px; padding: 11px 17px 0 18px; border-radius: 2px; background: #fff; }
.score-top { display: flex; justify-content: space-between; font-size: 14px; line-height: 20px; }
.score strong { display: flex; gap: 2px; font-size: 38px; line-height: 36px; color: #2159ad; }
.score sup { font-size: 16px; line-height: 24px; font-weight: 600; vertical-align: baseline; }
.meter { height: 8px; margin-top: 24px; border-radius: 4px; background: #2159ad; }
.editor section { margin-top: 24px; }
.editor h3 { font-size: 14px; line-height: 20px; font-weight: 600; margin-bottom: 7px; }
.editor section ul { border-radius: 2px; background: #fff; }
.editor li { display: flex; align-items: center; justify-content: space-between; height: 40px; padding: 0 18px; font-size: 14px; color: #b5b5b5; border-bottom: 1px solid #e4e4e4; }
.editor li:last-child { border: 0; height: 39px; }

.status { flex: none; height: 24px; display: flex; align-items: center; padding: 0 25px 0 24px; border-top: 1px solid #b5b5b5; background: linear-gradient(#dedede, #d2d2d2); font-size: 12px; color: #4f4f4f; white-space: nowrap; }
.words { margin-left: 20px; }
.proof { margin: 0 17px 0 20px; }
.focus { display: flex; align-items: center; gap: 7px; margin: 0 10px 0 auto; }
.view { width: 36px; height: 23px; display: flex; align-items: center; justify-content: center; }
.view.on { background: #9b9b9b; }
.step { width: 10px; margin-left: 7px; }
.slider { width: 100px; height: 18px; margin: 0 0 0 6px; appearance: none; background: radial-gradient(circle, #ddd 0 1px, transparent 2px), linear-gradient(#999, #999) center / 100% 4px no-repeat; }
.slider::-webkit-slider-thumb { appearance: none; width: 16px; height: 16px; border-radius: 50%; background: #fff; box-shadow: 0 0 2px rgba(0, 0, 0, 0.4); }
.percent { width: 26px; margin-left: 16px; }
</style>
